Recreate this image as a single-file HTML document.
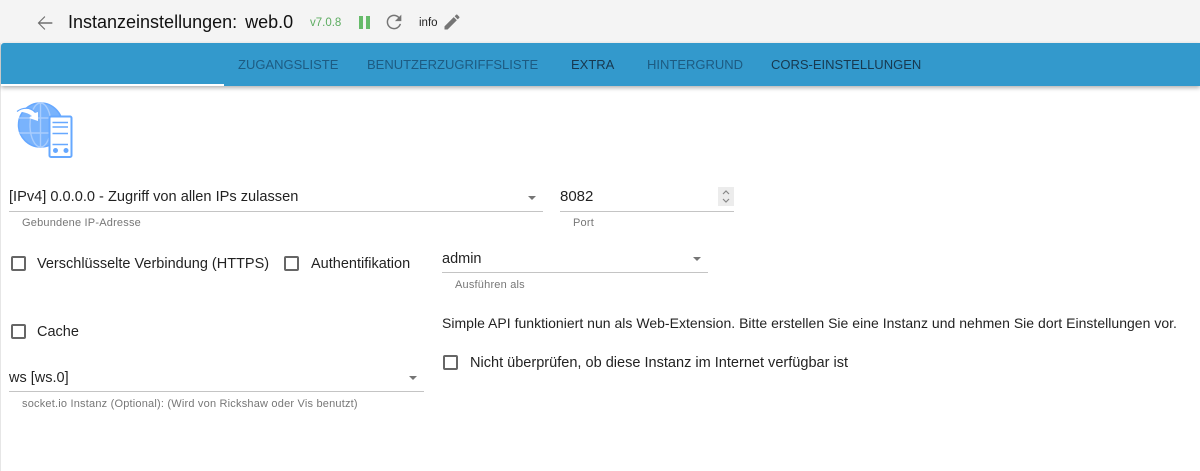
<!DOCTYPE html>
<html><head><meta charset="utf-8">
<style>
html,body{margin:0;padding:0;width:1200px;height:471px;overflow:hidden;background:#fff;font-family:"Liberation Sans",sans-serif;color:rgba(0,0,0,.87)}
.a{position:absolute;white-space:nowrap}
.tab{top:55px;font-size:13px;line-height:20px;color:#17384f}
.dim{color:#1d5b82}
.line{position:absolute;height:1px;background:#c4c4c4}
.lab{font-size:11px;line-height:14px;color:#777;letter-spacing:.2px}
.v{font-size:14.6px;line-height:20px}
.cb{position:absolute;width:11px;height:11px;border:2px solid #666;border-radius:2px}
.arr{position:absolute;width:0;height:0;border-left:4.5px solid transparent;border-right:4.5px solid transparent;border-top:4.5px solid #757575}
</style></head><body>
<div class="a" style="left:0;top:0;width:1200px;height:43px;background:#f4f4f4"></div>
<div class="a" style="left:0;top:43px;width:1px;height:428px;background:#e6e6e6"></div>

<svg class="a" style="left:33.500px;top:11.500px" width="22" height="22" viewBox="0 0 24 24"><path fill="#6e6e6e" d="M20 11.200H6.500l5.800-5.800L11.500 4.500 4 12l7.500 7.500.8-.9-5.800-5.800H20z"/></svg>
<div class="a" style="left:68px;top:10px;font-size:18px;line-height:25px;color:#111">Instanzeinstellungen: <span style="margin-left:3px">web.0</span></div>
<div class="a" style="left:310px;top:15px;font-size:11.5px;line-height:16px;color:#5cac60">v7.0.8</div>
<div class="a" style="left:359px;top:16px;width:4px;height:13px;background:#66bb6a"></div>
<div class="a" style="left:366px;top:16px;width:4px;height:13px;background:#66bb6a"></div>
<svg class="a" style="left:383px;top:11px" width="22" height="22" viewBox="0 0 24 24"><path fill="#757575" d="M17.650 6.350C16.200 4.900 14.210 4 12 4c-4.420 0-7.990 3.580-7.990 8s3.570 8 7.990 8c3.730 0 6.840-2.550 7.730-6h-1.700c-.82 2.600-3.200 4.400-6.030 4.400-3.530 0-6.400-2.870-6.400-6.400S8.470 5.600 12 5.600c1.800 0 3.300.75 4.500 1.900L13 11h7V4l-2.350 2.350z"/></svg>
<div class="a" style="left:419px;top:15px;font-size:11.5px;line-height:16px;color:#222">info</div>
<svg class="a" style="left:442px;top:12px" width="20" height="20" viewBox="0 0 24 24"><path fill="#757575" d="M3 17.250V21h3.750L17.810 9.940l-3.750-3.750L3 17.250zM20.710 7.040c.39-.39.39-1.020 0-1.410l-2.340-2.340c-.39-.39-1.020-.39-1.410 0l-1.830 1.830 3.750 3.750 1.830-1.830z"/></svg>

<div class="a" style="left:1px;top:43px;width:1199px;height:43px;background:#3399cc;border-radius:3px 0 0 0;box-shadow:0 2px 4px rgba(0,0,0,.3)"></div>
<div class="a" style="left:1px;top:84px;width:223px;height:2px;background:#fff"></div>
<div class="a tab dim" style="left:238px">ZUGANGSLISTE</div>
<div class="a tab dim" style="left:367px">BENUTZERZUGRIFFSLISTE</div>
<div class="a tab" style="left:571px">EXTRA</div>
<div class="a tab dim" style="left:647px">HINTERGRUND</div>
<div class="a tab" style="left:771px">CORS-EINSTELLUNGEN</div>

<svg class="a" style="left:16px;top:101px" width="60" height="60" viewBox="0 0 60 60">
<circle cx="24.500" cy="24" r="22" fill="#79b3fc" stroke="#66a8ff" stroke-width="1.500"/>
<g fill="none" stroke="#a9cdfd" stroke-width="1.400">
<ellipse cx="24.500" cy="24" rx="10.500" ry="22"/><path d="M24.500 2v44M3 17h43M3 32h43"/></g>
<path fill="#fff" d="M1 11C8 6 15 7 19 12l3-1 0 9-9-3 3-2C12 12 7 10.500 1 11z"/>
<path fill="none" stroke="#66a8ff" stroke-width="1.200" d="M1 10.500C7 6 14 6 19 11"/>
<rect x="33.500" y="15.500" width="22" height="40.500" rx="1.500" fill="#fff" stroke="#66a8ff" stroke-width="2"/>
<g stroke="#66a8ff" stroke-width="1.500"><path d="M36.500 21.500h15.500M36.500 26h15.500M36.500 32.500h15.500M36.500 43.500h15.500"/></g>
<circle cx="39.500" cy="49.500" r="2.500" fill="#66a8ff"/><circle cx="50" cy="49.500" r="2.500" fill="#66a8ff"/>
</svg>

<div class="a v" style="left:9px;top:187px">[IPv4] 0.0.0.0 - Zugriff von allen IPs zulassen</div>
<div class="arr" style="left:528px;top:195.500px"></div>
<div class="line" style="left:9px;top:211px;width:534px"></div>
<div class="a lab" style="left:22px;top:216px">Gebundene IP-Adresse</div>

<div class="a v" style="left:560px;top:187px;font-size:15px">8082</div>
<div class="a" style="left:718px;top:187px;width:16px;height:19px;background:#ececec"></div>
<svg class="a" style="left:718px;top:187px" width="16" height="19" viewBox="0 0 16 19"><path fill="none" stroke="#888" stroke-width="1.200" d="M5 7l3-3 3 3M5 12l3 3 3-3"/></svg>
<div class="line" style="left:560px;top:211px;width:174px"></div>
<div class="a lab" style="left:573px;top:216px">Port</div>

<div class="cb" style="left:11px;top:256px"></div>
<div class="a v" style="left:37px;top:254px;font-size:14.500px">Verschlüsselte Verbindung (HTTPS)</div>
<div class="cb" style="left:284px;top:256px"></div>
<div class="a v" style="left:311px;top:254px;font-size:14.500px">Authentifikation</div>

<div class="a v" style="left:442px;top:249px;font-size:14.500px">admin</div>
<div class="arr" style="left:693px;top:257px"></div>
<div class="line" style="left:442px;top:272px;width:266px"></div>
<div class="a lab" style="left:455px;top:278px">Ausführen als</div>

<div class="cb" style="left:11px;top:324px"></div>
<div class="a v" style="left:37px;top:322px;font-size:14.500px">Cache</div>

<div class="a" style="left:442px;top:314px;font-size:14px;line-height:18px;letter-spacing:.018px">Simple API funktioniert nun als Web-Extension. Bitte erstellen Sie eine Instanz und nehmen Sie dort Einstellungen vor.</div>
<div class="cb" style="left:443px;top:355px"></div>
<div class="a" style="left:470px;top:354px;font-size:14.540px;line-height:18px">Nicht überprüfen, ob diese Instanz im Internet verfügbar ist</div>

<div class="a v" style="left:9px;top:368px;font-size:14.500px">ws [ws.0]</div>
<div class="arr" style="left:409px;top:376px"></div>
<div class="line" style="left:9px;top:391px;width:415px"></div>
<div class="a lab" style="left:22px;top:397px">socket.io Instanz (Optional): (Wird von Rickshaw oder Vis benutzt)</div>
</body></html>
